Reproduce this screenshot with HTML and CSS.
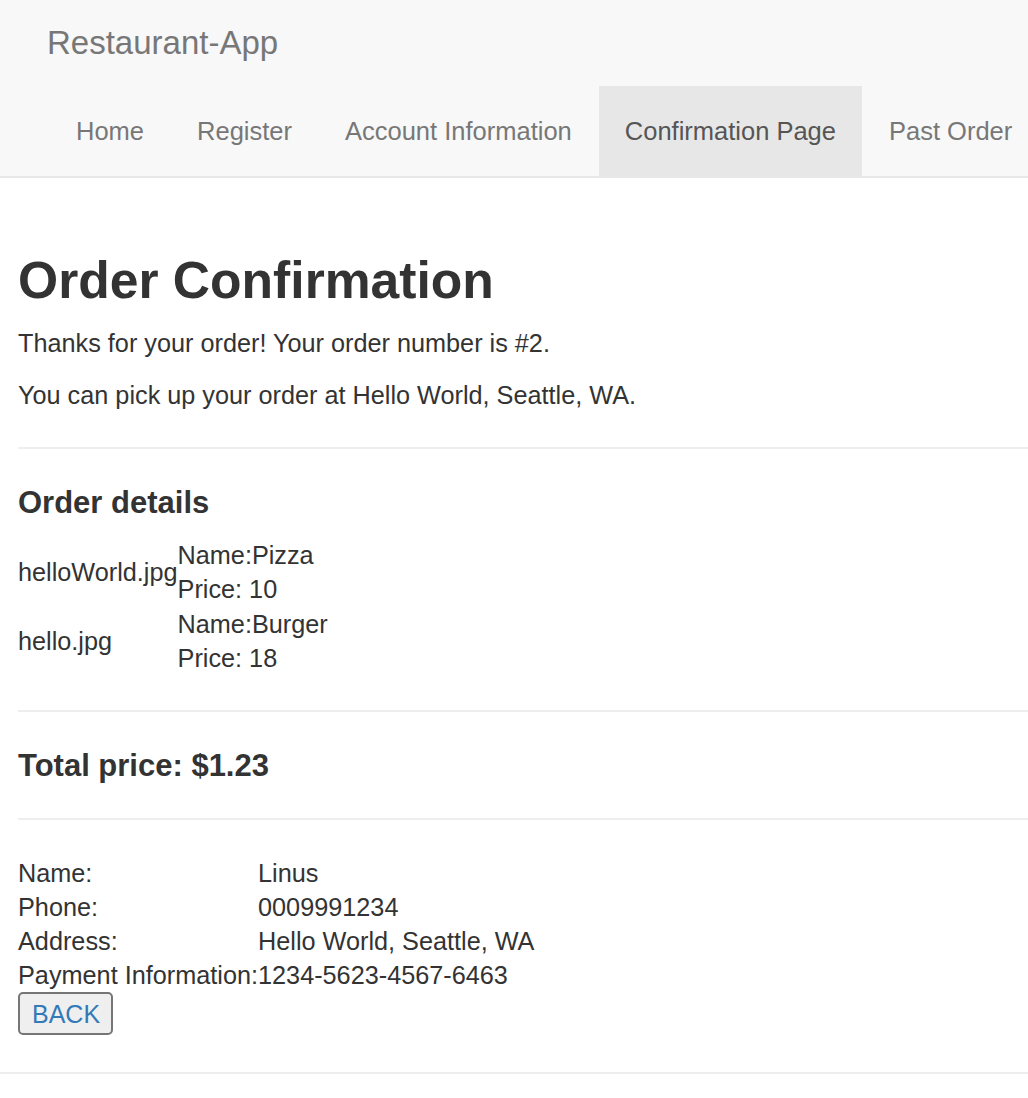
FILE: index.html
```html
<!DOCTYPE html>
<html lang="en">
<head>
<meta charset="utf-8">
<title>Restaurant-App</title>
<link rel="stylesheet" href="styles.css">
</head>
<body>
<nav class="navbar">
  <div class="navbar-header">
    <a class="navbar-brand" href="#">Restaurant-App</a>
  </div>
  <ul class="nav">
    <li><a href="#">Home</a></li>
    <li><a href="#">Register</a></li>
    <li><a href="#">Account Information</a></li>
    <li class="active"><a href="#">Confirmation Page</a></li>
    <li><a href="#">Past Order</a></li>
  </ul>
</nav>
<main class="content">
  <h2 class="title">Order Confirmation</h2>
  <p>Thanks for your order! Your order number is #2.</p>
  <p>You can pick up your order at Hello World, Seattle, WA.</p>
  <hr class="rule">
  <h4 class="subtitle">Order details</h4>
  <table class="items">
    <tr>
      <td class="img-alt">helloWorld.jpg</td>
      <td>Name:Pizza<br>Price: 10</td>
    </tr>
    <tr>
      <td class="img-alt">hello.jpg</td>
      <td>Name:Burger<br>Price: 18</td>
    </tr>
  </table>
  <hr class="rule">
  <h4 class="subtitle total">Total price: $1.23</h4>
  <hr class="rule rule-last">
  <table class="info">
    <tr><td>Name:</td><td>Linus</td></tr>
    <tr><td>Phone:</td><td>0009991234</td></tr>
    <tr><td>Address:</td><td>Hello World, Seattle, WA</td></tr>
    <tr><td>Payment Information:</td><td>1234-5623-4567-6463</td></tr>
  </table>
  <button class="back" type="button">BACK</button>
</main>
<hr class="footer-rule">
</body>
</html>
```
FILE: styles.css
```css
html, body {
  margin: 0;
  padding: 0;
  background: #fff;
}
body {
  font-family: "Liberation Sans", Arial, Helvetica, sans-serif;
  font-size: 25.25px;
  line-height: 34.3px;
  color: #333;
}
a {
  text-decoration: none;
}
.navbar {
  background: #f8f8f8;
  border-bottom: 2px solid #e7e7e7;
  overflow: hidden;
}
.navbar-header {
  height: 86px;
  display: flex;
  align-items: center;
  padding-left: 47px;
}
.navbar-brand {
  font-size: 33px;
  line-height: 34px;
  color: #777;
}
.nav {
  display: flex;
  flex-wrap: nowrap;
  margin: 0;
  padding: 0 0 0 50px;
  list-style: none;
  height: 90px;
  white-space: nowrap;
}
.nav li {
  flex: none;
  margin-right: 1px;
}
.nav a {
  display: block;
  padding: 0 26px;
  font-size: 25.5px;
  line-height: 90px;
  color: #777;
}
.nav .active a {
  background: #e7e7e7;
  color: #555;
}
.content {
  padding: 34px 0 0 18px;
}
.title {
  font-size: 51.6px;
  font-weight: bold;
  line-height: 56.5px;
  margin: 40px 0 17px;
}
p {
  margin: 0 0 18px;
}
.rule {
  border: 0;
  border-top: 2px solid #eee;
  margin: 35px 0 37px;
  height: 0;
}
.rule-last {
  margin-bottom: 36px;
}
.subtitle {
  font-size: 31px;
  font-weight: bold;
  line-height: 34px;
  margin: 19px 0 18px;
}
.items, .info {
  border-collapse: collapse;
  border-spacing: 0;
}
.items td, .info td {
  padding: 0;
  vertical-align: middle;
}
.info td {
  vertical-align: top;
  line-height: 34px;
}
.back {
  display: block;
  font-family: "Liberation Sans", Arial, Helvetica, sans-serif;
  font-size: 25px;
  line-height: 30px;
  color: #337ab7;
  background: #efefef;
  border: 2px solid #767676;
  border-radius: 5px;
  padding: 5px 12px;
  margin: 0;
  width: 95px;
  height: 43px;
}
.footer-rule {
  border: 0;
  border-top: 2px solid #eee;
  margin: 37px 0 0;
  height: 0;
}
```
